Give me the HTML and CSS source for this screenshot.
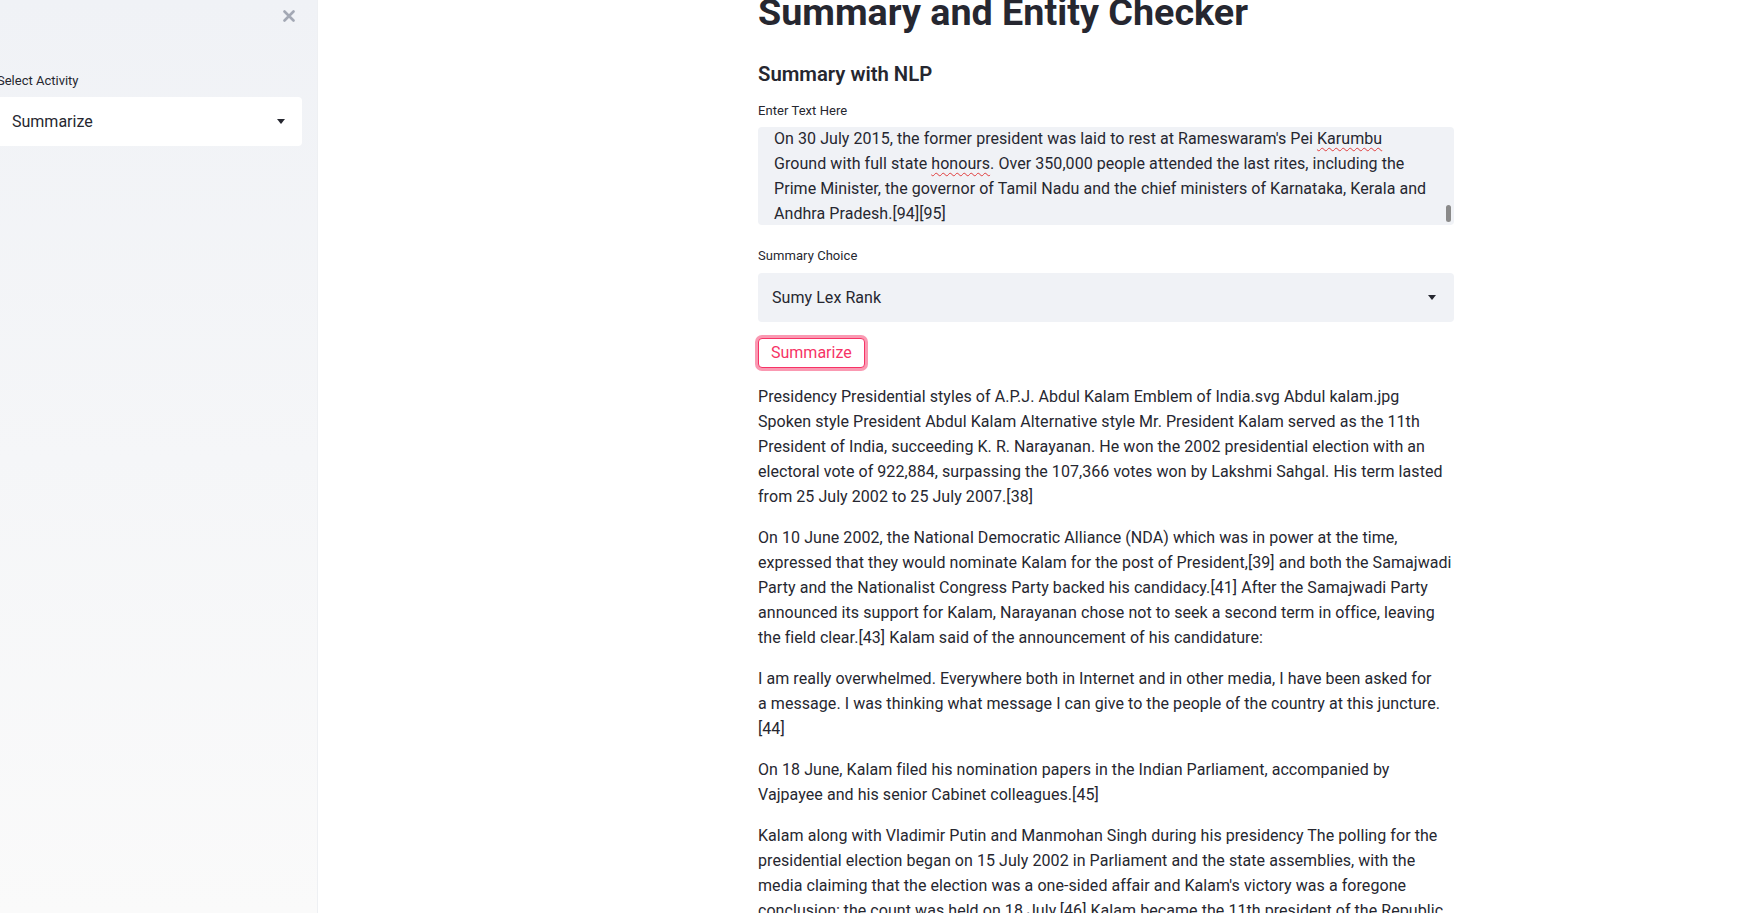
FILE: index.html
```html
<!DOCTYPE html>
<html lang="en">
<head>
<meta charset="utf-8">
<title>Summary and Entity Checker</title>
<link rel="stylesheet" href="styles.css">
</head>
<body>
<div class="app">
  <aside class="sidebar">
    <div class="sidebar-top">
      <button class="close-btn" aria-label="Close sidebar">
        <svg width="12" height="12" viewBox="0 0 12 12"><path d="M1.5 1.5l9 9M10.5 1.5l-9 9" stroke="currentColor" stroke-width="2.6" stroke-linecap="round"/></svg>
      </button>
    </div>
    <div class="sidebar-content">
      <div class="widget-label">Select Activity</div>
      <div class="select select-light">
        <span class="select-value">Summarize</span>
        <svg class="caret" width="8" height="5" viewBox="0 0 8 5"><path d="M0 0h8L4 5z" fill="currentColor"/></svg>
      </div>
    </div>
  </aside>
  <main class="main">
    <div class="block">
      <h1 class="title">Summary and Entity Checker</h1>
      <h3 class="subheader">Summary with NLP</h3>
      <div class="widget-label">Enter Text Here</div>
      <div class="textarea">
        <div class="textarea-text">On 30 July 2015, the former president was laid to rest at Rameswaram's Pei <span class="spell">Karumbu</span> Ground with full state <span class="spell">honours</span>. Over 350,000 people attended the last rites, including the Prime Minister, the governor of Tamil Nadu and the chief ministers of Karnataka, Kerala and Andhra Pradesh.[94][95]</div>
        <span class="scroll-thumb"></span>
      </div>
      <div class="widget-label label-choice">Summary Choice</div>
      <div class="select select-gray">
        <span class="select-value">Sumy Lex Rank</span>
        <svg class="caret" width="8" height="5" viewBox="0 0 8 5"><path d="M0 0h8L4 5z" fill="currentColor"/></svg>
      </div>
      <button class="btn">Summarize</button>
      <div class="output">
        <p>Presidency Presidential styles of A.P.J. Abdul Kalam Emblem of India.svg Abdul kalam.jpg Spoken style President Abdul Kalam Alternative style Mr. President Kalam served as the 11th President of India, succeeding K. R. Narayanan. He won the 2002 presidential election with an electoral vote of 922,884, surpassing the 107,366 votes won by Lakshmi Sahgal. His term lasted from 25 July 2002 to 25 July 2007.[38]</p>
        <p>On 10 June 2002, the National Democratic Alliance (NDA) which was in power at the time, expressed that they would nominate Kalam for the post of President,[39] and both the Samajwadi Party and the Nationalist Congress Party backed his candidacy.[41] After the Samajwadi Party announced its support for Kalam, Narayanan chose not to seek a second term in office, leaving the field clear.[43] Kalam said of the announcement of his candidature:</p>
        <p>I am really overwhelmed. Everywhere both in Internet and in other media, I have been asked for <span class="nowrap">a message.</span> I was thinking what message I can give to the people of the country at this juncture.[44]</p>
        <p>On 18 June, Kalam filed his nomination papers in the Indian Parliament, accompanied by Vajpayee and his senior Cabinet colleagues.[45]</p>
        <p>Kalam along with Vladimir Putin and Manmohan Singh during his presidency The polling for the presidential election began on 15 July 2002 in Parliament and the state assemblies, with the media claiming that the election was a one-sided affair and Kalam's victory was a foregone conclusion; the count was held on 18 July.[46] Kalam became the 11th president of the Republic of India in an uneventful election,[47] and moved into the Rashtrapati Bhavan after taking oath on 25 July.[47]</p>
      </div>
    </div>
  </main>
</div>
</body>
</html>
```

FILE: styles.css
```css
* { box-sizing: border-box; }
html, body { margin: 0; padding: 0; height: 100%; overflow: hidden; }
body {
  font-family: Roboto, "Liberation Sans", sans-serif;
  color: #262730;
  background: #ffffff;
  font-size: 16px;
}
.app { display: flex; height: 913px; overflow: hidden; }

.sidebar {
  width: 318px;
  flex: none;
  background: linear-gradient(180deg, #f0f2f6 0%, #fafafa 100%);
  border-right: 1px solid #eef0f3;
  display: flex;
  flex-direction: column;
}
.sidebar-top {
  height: 32px;
  display: flex;
  justify-content: flex-end;
  align-items: center;
  padding-right: 22px;
}
.close-btn {
  border: 0;
  background: transparent;
  color: #a3a8b4;
  padding: 0;
  width: 12px;
  height: 12px;
  display: flex;
}
.sidebar-content {
  margin-left: -3px;
  padding-top: 41px;
  width: 305px;
}

.widget-label {
  font-size: 13px;
  line-height: 16px;
  margin-bottom: 8px;
  color: #262730;
}
.select {
  height: 49px;
  border-radius: 4px;
  display: flex;
  align-items: center;
  justify-content: space-between;
  padding: 0 17px 0 15px;
  font-size: 16px;
}
.select-light { background: #ffffff; }
.select-gray { background: #f0f2f6; padding-left: 14px; padding-right: 18px; }
.caret { color: #262730; }

.main { flex: 1; padding-left: 424px; }
.block { width: 728px; padding: 0 16px; letter-spacing: 0.06px; }
.title {
  font-size: 37.7px;
  font-weight: 700;
  line-height: 48px;
  margin: -12px 0 0;
  letter-spacing: 0;
}
.subheader {
  font-size: 20.3px;
  font-weight: 600;
  line-height: 26px;
  margin: 25px 0 16px;
  letter-spacing: 0;
}
.textarea {
  position: relative;
  height: 98px;
  background: #f0f2f6;
  border-radius: 4px;
  overflow: hidden;
  padding: 0 16px;
}
.textarea-text {
  line-height: 25px;
  margin-top: -1px;
}
.spell { text-decoration: underline wavy #e03c3c; text-decoration-thickness: 1px; text-underline-offset: 3px; }
.scroll-thumb {
  position: absolute;
  right: 3px;
  top: 78px;
  width: 5px;
  height: 17px;
  border-radius: 3px;
  background: #8a8a8a;
}
.label-choice { margin-top: 23px; margin-bottom: 9px; }
.btn {
  display: block;
  margin-top: 16px;
  font: inherit;
  font-size: 16px;
  line-height: 26px;
  padding: 1px 12px;
  background: #fff;
  color: #f63366;
  border: 1px solid #f63366;
  border-radius: 4px;
  box-shadow: 0 0 0 3px rgba(246, 51, 102, 0.5);
}
.output { margin-top: 16px; }
.output p { margin: 0 0 16px; line-height: 25px; }
.nowrap { white-space: nowrap; }
```
